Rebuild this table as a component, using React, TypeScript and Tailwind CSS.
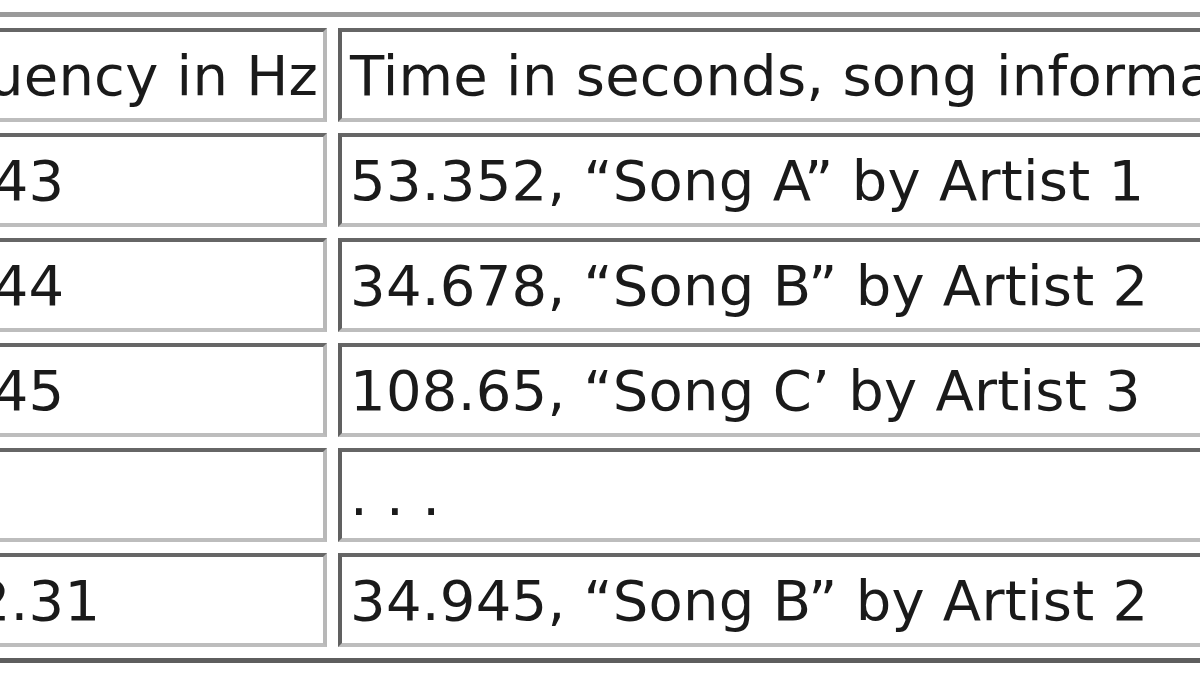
import React from "react";

// --- Song lookup table (zoomed crop) ---
const rows: [string, string][] = [
    ["123.43", "53.352, \u201CSong A\u201D by Artist 1"],
    ["123.44", "34.678, \u201CSong B\u201D by Artist 2"],
    ["123.45", "108.65, \u201CSong C\u2019 by Artist 3"],
    ["", ". . ."],
    ["1002.31", "34.945, \u201CSong B\u201D by Artist 2"],
];

const cell =
    "border-4 border-t-[#666666] border-l-[#606060] border-b-[#bdbdbd] border-r-[#b8b8b8] px-[8px] pt-[11px] pb-[9px] leading-[66px] whitespace-nowrap text-left align-top tracking-[0.25px]";

export default function App() {
    return (
        <div
            className="w-[1200px] h-[675px] overflow-hidden bg-white pt-[12px] text-[56px] text-[#1a1a1a]"
            style={{ fontFamily: '"DejaVu Sans", Verdana, sans-serif' }}
        >
            <table className="ml-[-156px] border-separate border-spacing-[11px] border-t-[5px] border-b-[5px] border-t-[#9a9a9a] border-b-[#5e5e5e]">
                <tbody>
                    <tr>
                        <td className={cell + " w-[472px] min-w-[472px] max-w-[472px]"}>Frequency in Hz</td>
                        <td className={cell + " w-[1000px] min-w-[1000px]"}>Time in seconds, song information</td>
                    </tr>
                    {rows.map(([f, t], i) => (
                        <tr key={i}>
                            <td className={cell}>{f}</td>
                            <td className={cell}>{t}</td>
                        </tr>
                    ))}
                </tbody>
            </table>
        </div>
    );
}
